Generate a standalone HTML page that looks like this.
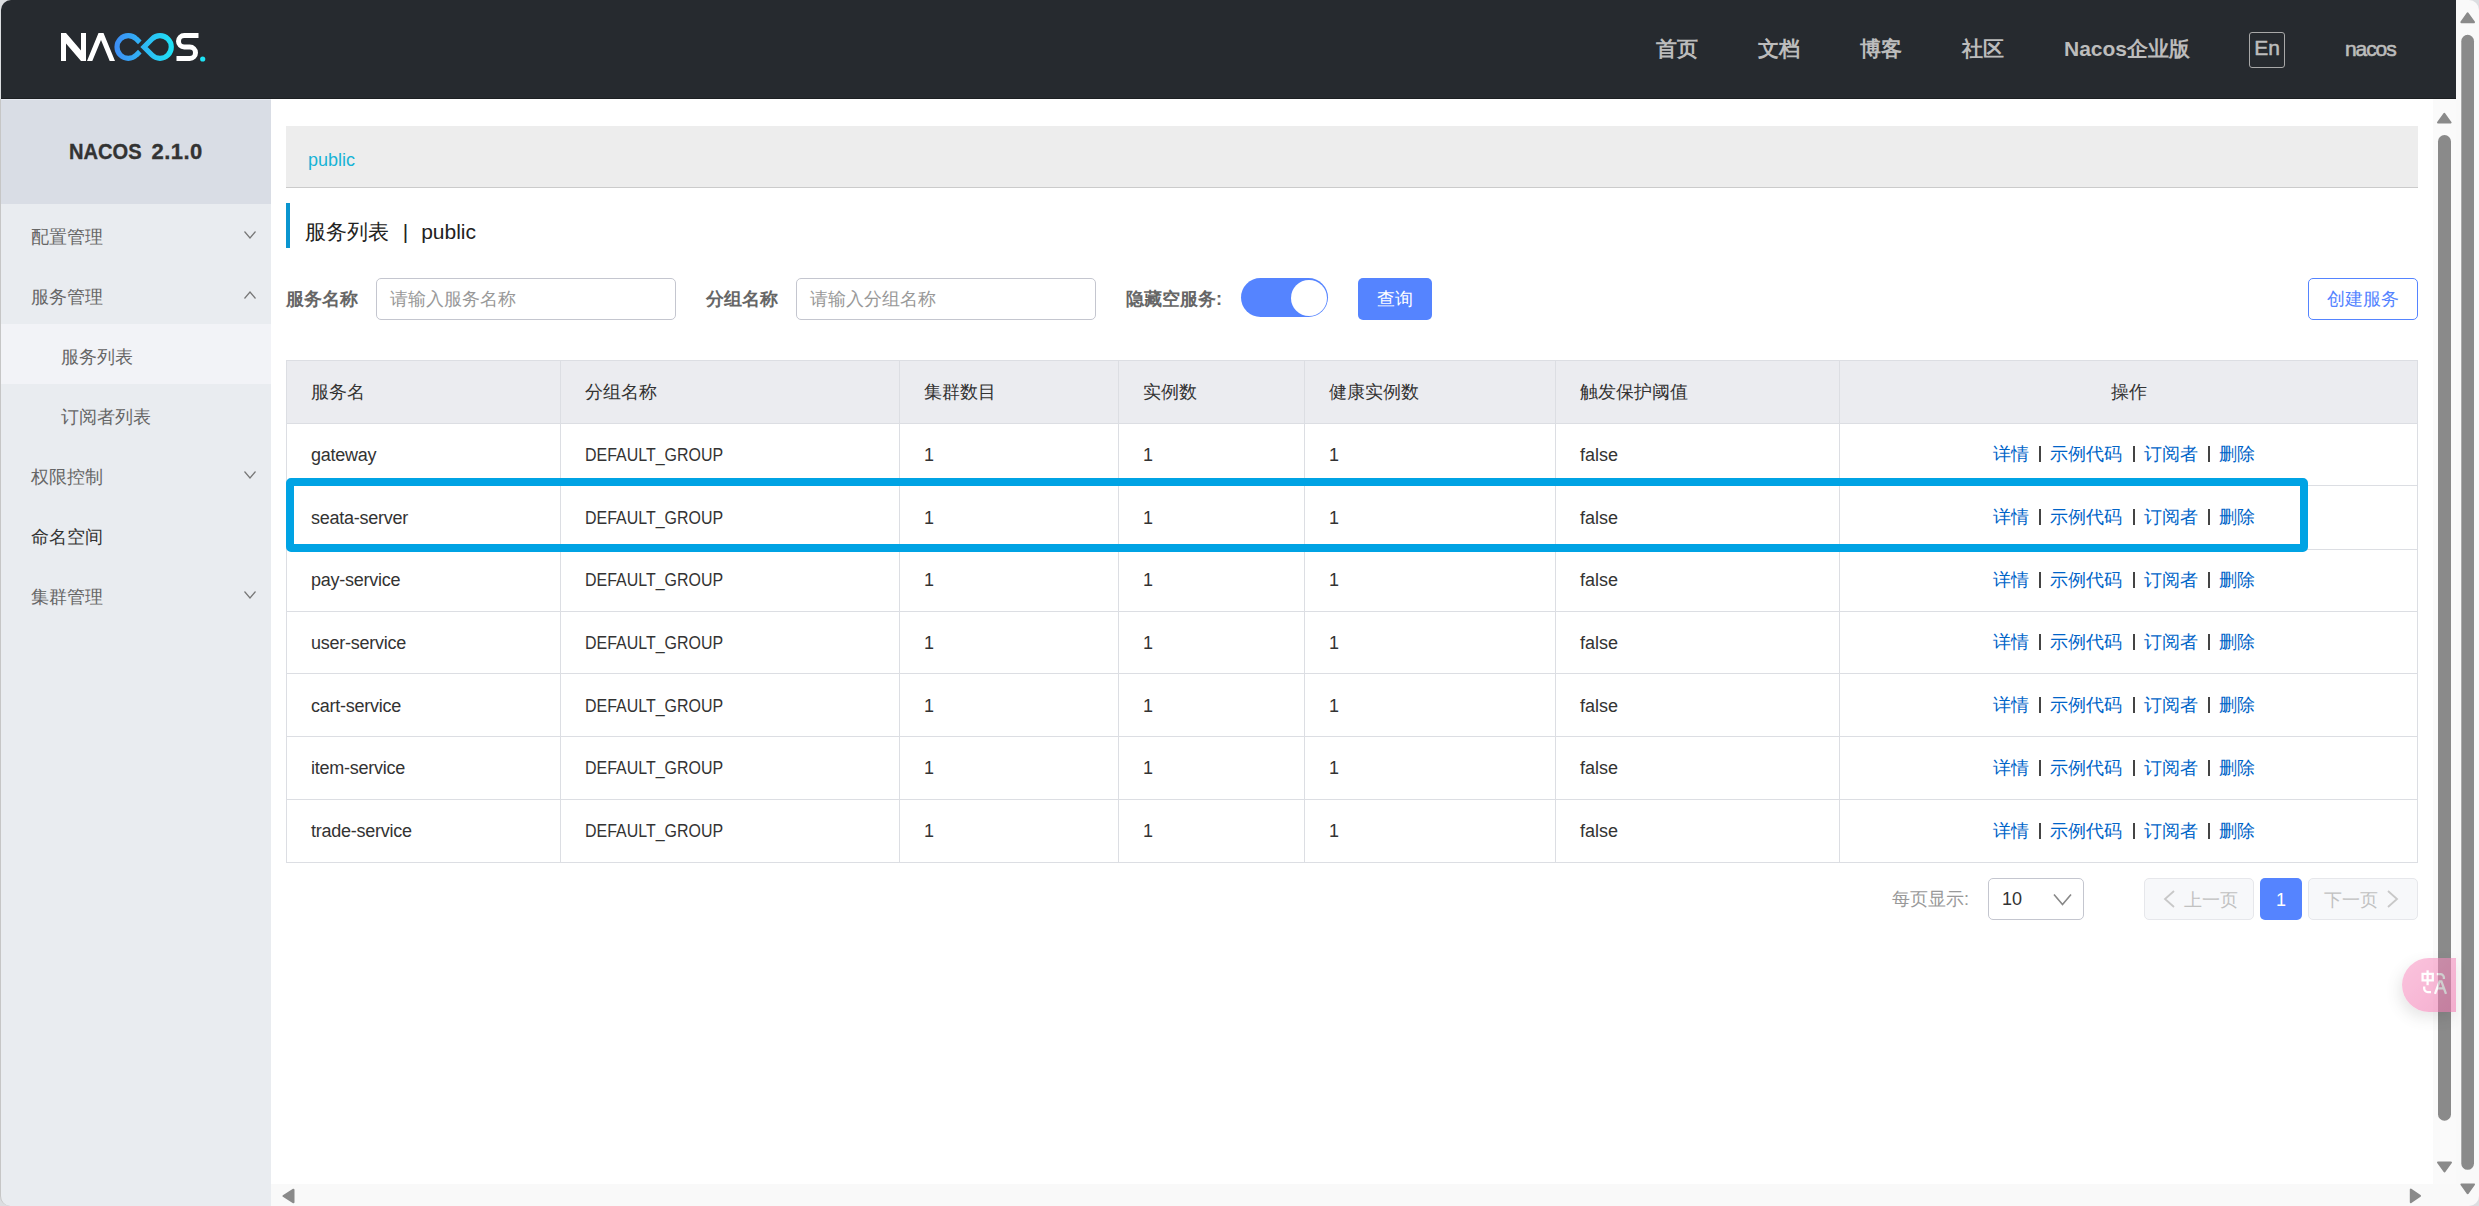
<!DOCTYPE html>
<html><head><meta charset="utf-8">
<style>
*{box-sizing:border-box;margin:0;padding:0}
html,body{width:2479px;height:1206px;overflow:hidden;background:#dcdee1;font-family:"Liberation Sans",sans-serif;}
.abs{position:absolute}
#hdr{left:1px;top:0;width:2455px;height:99px;background:#262a2f;border-bottom:1px solid #1c1f22;border-top-left-radius:10px}
.nav{position:absolute;top:36px;font-size:21px;font-weight:bold;color:#bcbcbc;line-height:26px;white-space:nowrap}
#side{left:0;top:99px;width:271px;height:1107px;background:#e9ecf0;border-left:1px solid #c6c6c6;border-bottom-left-radius:10px}
#main{left:271px;top:99px;width:2162px;height:1085px;background:#fff}
#sidetop{left:1px;top:99px;width:270px;height:105px;background:#d9dde5;border-top:1px solid #e6e9f0}
.mi{position:absolute;left:1px;width:270px;height:60px;font-size:18px;color:#666;line-height:66px}
.chev{position:absolute;left:244px;width:12px;height:8px}
#vsb2{left:2456px;top:0;width:23px;height:1206px;background:#f9f9f9;border-top-right-radius:10px;border-bottom-right-radius:10px}
#vsb1{left:2433px;top:99px;width:23px;height:1085px;background:#fafafa}
#hsb{left:271px;top:1184px;width:2185px;height:22px;background:#f9f9f9;border-bottom-right-radius:0}
.thumb{position:absolute;background:#8a8a8a;border-radius:7px}
.lbl{top:286px;font-size:18px;line-height:26px;font-weight:bold;color:#666;white-space:nowrap}
.inp{top:278px;width:300px;height:42px;border:1px solid #c4c6cf;border-radius:5px;font-size:18px;line-height:40px;color:#999;padding-left:13px}
.hl{left:286px;width:2132px;height:1px;background:#dcdee3}
.vl{top:360px;width:1px;height:503px;background:#dcdee3}
.cell{font-size:18px;color:#333;display:flex;align-items:center;white-space:nowrap}
.rc{padding-top:2px}
.ops{justify-content:center;padding-right:9px}
.cell.rc.ops{padding-top:0}
.cell.c{justify-content:center}
.dg{display:inline-block;transform:scaleX(0.887);transform-origin:0 50%}
.ops a{color:#0064c8}
.ops i{display:inline-block;width:2px;height:16px;background:#444;margin:0 9px 0 10.5px}
.pg{top:878px;width:110px;height:42px;border:1px solid #e6e7eb;border-radius:5px;background:#f7f8fa;color:#c1c1c1;font-size:18px;line-height:40px;padding-top:1px;text-align:center}
</style></head>
<body>
<!-- header -->
<div id="hdr" class="abs"></div>
<svg class="abs" style="left:0;top:0" width="260" height="98" viewBox="0 0 260 98">
  <defs><linearGradient id="lg" x1="114" y1="0" x2="174" y2="0" gradientUnits="userSpaceOnUse">
    <stop offset="0" stop-color="#3e8cf5"/><stop offset="1" stop-color="#1ee3f5"/></linearGradient></defs>
  <g fill="#fff">
    <path d="M61 61V33h5l15 17.5V33h5v28h-5L66 43.5V61z"/>
    <path d="M87 61l11.5-28h5L115 61h-5.3L101 40 92.3 61z"/>
    </g><path d="M198.5 35.5H184.25A5.75 5.75 0 0 0 184.25 47H189.75A5.75 5.75 0 0 1 189.75 58.5H176.5" fill="none" stroke="#fff" stroke-width="5"/><g>
  </g>
  <circle cx="202.7" cy="59" r="2.6" fill="#1ee3f5"/>
  <path d="M139.8 42.3L136.3 39A11.3 11.3 0 1 0 136.3 55L139.8 51.7" fill="none" stroke="url(#lg)" stroke-width="5.2"/>
  <path d="M152 39A11.3 11.3 0 1 1 152 55L144 47z" fill="none" stroke="url(#lg)" stroke-width="5.2" stroke-linejoin="miter"/>
</svg>
<div class="nav" style="left:1656px">首页</div>
<div class="nav" style="left:1758px">文档</div>
<div class="nav" style="left:1860px">博客</div>
<div class="nav" style="left:1962px">社区</div>
<div class="nav" style="left:2064px">Nacos企业版</div>
<div class="abs" style="left:2249px;top:32px;width:36px;height:36px;border:1px solid #a8a8a8;border-radius:3px;font-size:21px;color:#bdbdbd;line-height:30px;text-align:center;-webkit-text-stroke:0.5px #bdbdbd">En</div>
<div class="nav" style="left:2345px;top:36px;font-weight:normal;letter-spacing:-1.1px;-webkit-text-stroke:0.6px #bcbcbc">nacos</div>

<!-- sidebar -->
<div id="side" class="abs"></div>
<div id="main" class="abs"></div>
<div id="sidetop" class="abs"></div>
<div class="abs" style="left:69px;top:139px;font-size:22px;line-height:26px;font-weight:bold;color:#333;white-space:nowrap;-webkit-text-stroke:0.35px #333;transform:scaleX(0.913);transform-origin:0 0">NACOS</div>
<div class="abs" style="left:151.5px;top:139px;font-size:22px;line-height:26px;font-weight:bold;color:#333;white-space:nowrap;-webkit-text-stroke:0.35px #333;letter-spacing:0.45px">2.1.0</div>
<div class="mi" style="top:204px;padding-left:30px">配置管理</div>
<div class="mi" style="top:264px;padding-left:30px">服务管理</div>
<div class="mi" style="top:324px;padding-left:60px;background:#f2f3f7">服务列表</div>
<div class="mi" style="top:384px;padding-left:60px">订阅者列表</div>
<div class="mi" style="top:444px;padding-left:30px">权限控制</div>
<div class="mi" style="top:504px;padding-left:30px;color:#333">命名空间</div>
<div class="mi" style="top:564px;padding-left:30px">集群管理</div>
<svg class="chev abs" style="top:231px" viewBox="0 0 12 8"><path d="M0.5 0.5L6 7L11.5 0.5" fill="none" stroke="#777" stroke-width="1.2"/></svg>
<svg class="chev abs" style="top:291px" viewBox="0 0 12 8"><path d="M0.5 7.5L6 1L11.5 7.5" fill="none" stroke="#777" stroke-width="1.2"/></svg>
<svg class="chev abs" style="top:471px" viewBox="0 0 12 8"><path d="M0.5 0.5L6 7L11.5 0.5" fill="none" stroke="#777" stroke-width="1.2"/></svg>
<svg class="chev abs" style="top:591px" viewBox="0 0 12 8"><path d="M0.5 0.5L6 7L11.5 0.5" fill="none" stroke="#777" stroke-width="1.2"/></svg>

<div class="abs" style="left:286px;top:126px;width:2132px;height:62px;background:#ededed;border-bottom:1px solid #cbcbcb"></div>
<div class="abs" style="left:308px;top:148px;font-size:18px;line-height:24px;color:#16b3d6">public</div>
<div class="abs" style="left:286px;top:203px;width:4px;height:45px;background:#0a95cf"></div>
<div class="abs" style="left:305px;top:218px;font-size:21px;line-height:28px;color:#222;white-space:nowrap">服务列表 <span style="margin:0 7px 0 8px">|</span> public</div>
<div class="abs lbl" style="left:286px">服务名称</div>
<div class="abs inp" style="left:376px">请输入服务名称</div>
<div class="abs lbl" style="left:706px">分组名称</div>
<div class="abs inp" style="left:796px">请输入分组名称</div>
<div class="abs lbl" style="left:1126px">隐藏空服务:</div>
<div class="abs" style="left:1241px;top:278px;width:87px;height:39px;border-radius:20px;background:#5584ff"></div>
<div class="abs" style="left:1290.5px;top:279.5px;width:36.5px;height:36.5px;border-radius:50%;background:#fff"></div>
<div class="abs" style="left:1358px;top:278px;width:74px;height:42px;border-radius:5px;background:#5584ff;color:#fff;font-size:18px;line-height:42px;text-align:center">查询</div>
<div class="abs" style="left:2308px;top:278px;width:110px;height:42px;border-radius:5px;border:1px solid #5584ff;color:#5584ff;font-size:18px;line-height:40px;text-align:center">创建服务</div>

<div class="abs" style="left:286px;top:360px;width:2132px;height:63px;background:#ebecf0"></div>
<div class="abs hl" style="top:360px"></div>
<div class="abs hl" style="top:423px"></div>
<div class="abs hl" style="top:485px"></div>
<div class="abs hl" style="top:548.5px"></div>
<div class="abs hl" style="top:611px"></div>
<div class="abs hl" style="top:673px"></div>
<div class="abs hl" style="top:736px"></div>
<div class="abs hl" style="top:799px"></div>
<div class="abs hl" style="top:862px"></div>
<div class="abs vl" style="left:286px"></div>
<div class="abs vl" style="left:560px"></div>
<div class="abs vl" style="left:899px"></div>
<div class="abs vl" style="left:1118px"></div>
<div class="abs vl" style="left:1304px"></div>
<div class="abs vl" style="left:1555px"></div>
<div class="abs vl" style="left:1839px"></div>
<div class="abs vl" style="left:2417px"></div>
<div class="abs cell" style="left:311px;top:360px;height:63px;color:#333">服务名</div>
<div class="abs cell" style="left:585px;top:360px;height:63px;color:#333">分组名称</div>
<div class="abs cell" style="left:924px;top:360px;height:63px;color:#333">集群数目</div>
<div class="abs cell" style="left:1143px;top:360px;height:63px;color:#333">实例数</div>
<div class="abs cell" style="left:1329px;top:360px;height:63px;color:#333">健康实例数</div>
<div class="abs cell" style="left:1580px;top:360px;height:63px;color:#333">触发保护阈值</div>
<div class="abs cell c" style="left:1839.5px;width:578px;text-align:center;top:360px;height:63px;color:#333">操作</div>
<div class="abs cell rc" style="left:311px;top:423px;height:62.5px;letter-spacing:-0.25px">gateway</div>
<div class="abs cell rc" style="left:585px;top:423px;height:62.5px"><span class="dg">DEFAULT_GROUP</span></div>
<div class="abs cell rc" style="left:924px;top:423px;height:62.5px">1</div>
<div class="abs cell rc" style="left:1143px;top:423px;height:62.5px">1</div>
<div class="abs cell rc" style="left:1329px;top:423px;height:62.5px">1</div>
<div class="abs cell rc" style="left:1580px;top:423px;height:62.5px">false</div>
<div class="abs cell rc ops" style="left:1839.5px;width:578px;text-align:center;top:423px;height:62.5px"><a>详情</a><i></i><a>示例代码</a><i></i><a>订阅者</a><i></i><a>删除</a></div>
<div class="abs cell rc" style="left:311px;top:485.5px;height:63.0px;letter-spacing:-0.25px">seata-server</div>
<div class="abs cell rc" style="left:585px;top:485.5px;height:63.0px"><span class="dg">DEFAULT_GROUP</span></div>
<div class="abs cell rc" style="left:924px;top:485.5px;height:63.0px">1</div>
<div class="abs cell rc" style="left:1143px;top:485.5px;height:63.0px">1</div>
<div class="abs cell rc" style="left:1329px;top:485.5px;height:63.0px">1</div>
<div class="abs cell rc" style="left:1580px;top:485.5px;height:63.0px">false</div>
<div class="abs cell rc ops" style="left:1839.5px;width:578px;text-align:center;top:485.5px;height:63.0px"><a>详情</a><i></i><a>示例代码</a><i></i><a>订阅者</a><i></i><a>删除</a></div>
<div class="abs cell rc" style="left:311px;top:548.5px;height:62.700000000000045px;letter-spacing:-0.25px">pay-service</div>
<div class="abs cell rc" style="left:585px;top:548.5px;height:62.700000000000045px"><span class="dg">DEFAULT_GROUP</span></div>
<div class="abs cell rc" style="left:924px;top:548.5px;height:62.700000000000045px">1</div>
<div class="abs cell rc" style="left:1143px;top:548.5px;height:62.700000000000045px">1</div>
<div class="abs cell rc" style="left:1329px;top:548.5px;height:62.700000000000045px">1</div>
<div class="abs cell rc" style="left:1580px;top:548.5px;height:62.700000000000045px">false</div>
<div class="abs cell rc ops" style="left:1839.5px;width:578px;text-align:center;top:548.5px;height:62.700000000000045px"><a>详情</a><i></i><a>示例代码</a><i></i><a>订阅者</a><i></i><a>删除</a></div>
<div class="abs cell rc" style="left:311px;top:611.2px;height:62.59999999999991px;letter-spacing:-0.25px">user-service</div>
<div class="abs cell rc" style="left:585px;top:611.2px;height:62.59999999999991px"><span class="dg">DEFAULT_GROUP</span></div>
<div class="abs cell rc" style="left:924px;top:611.2px;height:62.59999999999991px">1</div>
<div class="abs cell rc" style="left:1143px;top:611.2px;height:62.59999999999991px">1</div>
<div class="abs cell rc" style="left:1329px;top:611.2px;height:62.59999999999991px">1</div>
<div class="abs cell rc" style="left:1580px;top:611.2px;height:62.59999999999991px">false</div>
<div class="abs cell rc ops" style="left:1839.5px;width:578px;text-align:center;top:611.2px;height:62.59999999999991px"><a>详情</a><i></i><a>示例代码</a><i></i><a>订阅者</a><i></i><a>删除</a></div>
<div class="abs cell rc" style="left:311px;top:673.8px;height:62.80000000000007px;letter-spacing:-0.25px">cart-service</div>
<div class="abs cell rc" style="left:585px;top:673.8px;height:62.80000000000007px"><span class="dg">DEFAULT_GROUP</span></div>
<div class="abs cell rc" style="left:924px;top:673.8px;height:62.80000000000007px">1</div>
<div class="abs cell rc" style="left:1143px;top:673.8px;height:62.80000000000007px">1</div>
<div class="abs cell rc" style="left:1329px;top:673.8px;height:62.80000000000007px">1</div>
<div class="abs cell rc" style="left:1580px;top:673.8px;height:62.80000000000007px">false</div>
<div class="abs cell rc ops" style="left:1839.5px;width:578px;text-align:center;top:673.8px;height:62.80000000000007px"><a>详情</a><i></i><a>示例代码</a><i></i><a>订阅者</a><i></i><a>删除</a></div>
<div class="abs cell rc" style="left:311px;top:736.6px;height:62.799999999999955px;letter-spacing:-0.25px">item-service</div>
<div class="abs cell rc" style="left:585px;top:736.6px;height:62.799999999999955px"><span class="dg">DEFAULT_GROUP</span></div>
<div class="abs cell rc" style="left:924px;top:736.6px;height:62.799999999999955px">1</div>
<div class="abs cell rc" style="left:1143px;top:736.6px;height:62.799999999999955px">1</div>
<div class="abs cell rc" style="left:1329px;top:736.6px;height:62.799999999999955px">1</div>
<div class="abs cell rc" style="left:1580px;top:736.6px;height:62.799999999999955px">false</div>
<div class="abs cell rc ops" style="left:1839.5px;width:578px;text-align:center;top:736.6px;height:62.799999999999955px"><a>详情</a><i></i><a>示例代码</a><i></i><a>订阅者</a><i></i><a>删除</a></div>
<div class="abs cell rc" style="left:311px;top:799.4px;height:62.80000000000007px;letter-spacing:-0.25px">trade-service</div>
<div class="abs cell rc" style="left:585px;top:799.4px;height:62.80000000000007px"><span class="dg">DEFAULT_GROUP</span></div>
<div class="abs cell rc" style="left:924px;top:799.4px;height:62.80000000000007px">1</div>
<div class="abs cell rc" style="left:1143px;top:799.4px;height:62.80000000000007px">1</div>
<div class="abs cell rc" style="left:1329px;top:799.4px;height:62.80000000000007px">1</div>
<div class="abs cell rc" style="left:1580px;top:799.4px;height:62.80000000000007px">false</div>
<div class="abs cell rc ops" style="left:1839.5px;width:578px;text-align:center;top:799.4px;height:62.80000000000007px"><a>详情</a><i></i><a>示例代码</a><i></i><a>订阅者</a><i></i><a>删除</a></div>
<div class="abs" style="left:286px;top:478px;width:2022px;height:74px;border:8px solid #00a3e4;border-radius:5px"></div>
<div class="abs" style="left:1892px;top:886px;font-size:18px;line-height:26px;color:#999">每页显示:</div>
<div class="abs" style="left:1988px;top:878px;width:96px;height:42px;border:1px solid #c4c6cf;border-radius:5px;font-size:18px;line-height:40px;color:#333;padding-left:13px">10</div>
<svg class="abs" style="left:2053px;top:893px" width="19" height="13" viewBox="0 0 19 13"><path d="M1 1.5L9.5 11.5L18 1.5" fill="none" stroke="#888" stroke-width="1.6"/></svg>
<div class="abs pg" style="left:2144px;padding-left:3px"><svg width="12" height="18" viewBox="0 0 12 18" style="vertical-align:-2px;margin-right:9px"><path d="M11 1L2 9L11 17" fill="none" stroke="#c8c8c8" stroke-width="1.8"/></svg>上一页</div>
<div class="abs" style="left:2260px;top:878px;width:42px;height:42px;border-radius:5px;background:#5584ff;color:#fff;font-size:18px;line-height:42px;padding-top:1px;text-align:center">1</div>
<div class="abs pg" style="left:2308px;padding-right:4px">下一页<svg width="12" height="18" viewBox="0 0 12 18" style="vertical-align:-2px;margin-left:9px"><path d="M1 1L10 9L1 17" fill="none" stroke="#c8c8c8" stroke-width="1.8"/></svg></div>


<!-- scrollbars -->
<div id="vsb2" class="abs"></div>
<div id="vsb1" class="abs"></div>
<div id="hsb" class="abs"></div>
<svg class="abs" style="left:0;top:0;pointer-events:none" width="2479" height="1206" viewBox="0 0 2479 1206">
 <g fill="#8a8a8a" stroke="#8a8a8a" stroke-width="2" stroke-linejoin="round">
  <path d="M2467.6 13.4L2474 22.2H2461.4z"/>
  <path d="M2467.6 1193.3L2474 1184.4H2461.4z"/>
  <path d="M2444.3 113.8L2450.6 122.5H2438z"/>
  <path d="M2444.5 1171.4L2451 1162.5H2438z"/>
  <path d="M283.4 1196L293.5 1189.7V1202.3z"/>
  <path d="M2420 1195.9L2410.8 1189.6V1202.2z"/>
 </g>
 <rect x="2461.3" y="34.8" width="12.7" height="1135" rx="6.35" fill="#8a8a8a"/>
 <rect x="2438" y="135" width="13" height="985.7" rx="6.5" fill="#8a8a8a"/>
</svg>
<div class="abs" style="left:2402px;top:958px;width:54px;height:54px;opacity:0.58">
<div style="position:absolute;left:0;top:0;width:54px;height:54px;border-radius:27px 0 0 27px;background:linear-gradient(135deg,#f99ac6,#ee76ae);box-shadow:-3px 6px 14px rgba(0,0,0,0.16)"></div>
<svg style="position:absolute;left:0;top:0" width="54" height="54" viewBox="2402 958 54 54">
 <g fill="none" stroke="#fff" stroke-width="2.3">
  <path d="M2422.6 973.9H2432.8V980.3H2422.6z"/>
  <path d="M2427.6 970.3V985.2"/>
  <path d="M2436.8 974.2H2440.5A3.4 3.4 0 0 1 2443.9 977.6V979"/>
  <path d="M2424.2 986.5V988.5A3.6 3.6 0 0 0 2427.8 992.1H2431"/>
  <path d="M2435 993.8L2439.6 981.4H2441.4L2446 993.8M2436.8 988.3H2444.3"/>
 </g>
</svg></div>
</body></html>
